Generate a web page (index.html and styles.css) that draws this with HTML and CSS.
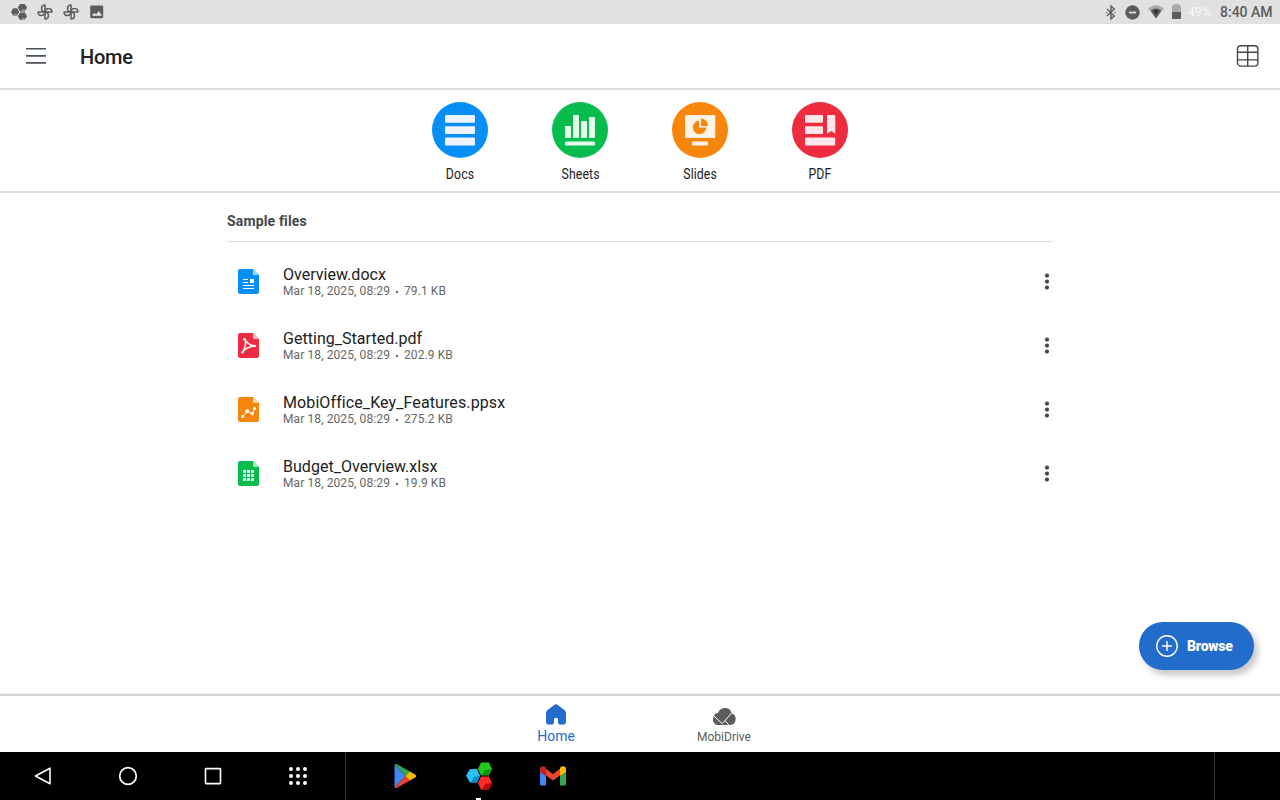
FILE: index.html
```html
<!DOCTYPE html>
<html lang="en">
<head>
<meta charset="utf-8">
<title>Home</title>
<link rel="stylesheet" href="styles.css">
</head>
<body>
<svg class="defs" width="0" height="0">
  <defs>
    <symbol id="pinwheel" viewBox="0 0 16 16">
      <g fill="none" stroke="#5c5c5c" stroke-width="1.5" stroke-linejoin="round">
        <path id="vane" d="M8 8V1.1H6.8A3.2 3.2 0 0 0 4.6 4.3C4.6 6.4 6 8 8 8Z"/>
        <use href="#vane" transform="rotate(90 8 8)"/>
        <use href="#vane" transform="rotate(180 8 8)"/>
        <use href="#vane" transform="rotate(270 8 8)"/>
      </g>
    </symbol>
    <symbol id="more" viewBox="0 0 6 18">
      <g fill="#40474e"><circle cx="3" cy="2.6" r="2.1"/><circle cx="3" cy="8.6" r="2.1"/><circle cx="3" cy="14.6" r="2.1"/></g>
    </symbol>
  </defs>
</svg>

<div class="status">
  <div class="status-left">
    <svg width="16" height="16" viewBox="0 0 16 16">
      <g fill="#5c5c5c"><path d="M2.2 4.2H6.2L8.2 8 6.2 11.8H2.2L0 8Z"/><path d="M9 0H13.8L16 3.6 13.8 7.4H9L6.8 3.6Z"/><path d="M9 8.6H13.8L16 12.2 13.8 16H9L6.8 12.2Z"/></g>
      <g fill="#999"><path d="M7.2 10 6.2 11.8H2.2L3.4 9.8Z"/><path d="M15 5.4 13.8 7.4H9.6L11.5 5.4Z"/><path d="M15 14 13.8 16H9.6L11.5 14Z"/></g>
    </svg>
    <svg width="16" height="16"><use href="#pinwheel"/></svg>
    <svg width="16" height="16"><use href="#pinwheel"/></svg>
    <svg width="16" height="16" viewBox="0 0 16 16"><rect x="1.2" y="1.6" width="13" height="12.6" rx="1.4" fill="#5c5c5c"/><path d="M3 11.8 5.3 8.7 7 10.5 9.8 7 13 11.8Z" fill="#e8e8e8"/></svg>
  </div>
  <div class="status-right">
    <svg class="bt" width="10" height="15" viewBox="0 0 10 15"><path d="M1 4 8.3 10.9 5 14V1L8.3 4.1 1 11" fill="none" stroke="#5c5c5c" stroke-width="1.4"/><path d="M0 7.5H1.4M8.3 7.5H9.7" stroke="#5c5c5c" stroke-width="1.2"/></svg>
    <svg class="dnd" width="15" height="15" viewBox="0 0 15 15"><circle cx="7.5" cy="7.5" r="7.2" fill="#5c5c5c"/><path d="M4 7.5H11" stroke="#e2e2e2" stroke-width="1.8"/></svg>
    <svg class="wifi" width="16" height="14" viewBox="0 0 16 14"><path d="M0 3.4Q8-2.8 16 3.4L8 13.6Z" fill="#a9a9a9"/><path d="M2.7 5.8Q8 1.4 13.3 5.8L8 13.6Z" fill="#5c5c5c"/><path d="M5.7 5.6Q8 3.5 10.3 5.6L8 10Z" fill="#2e2e2e"/></svg>
    <svg class="battery" width="9" height="15" viewBox="0 0 9 15"><path d="M2.2 0H6.8V1.2H8Q9 1.2 9 2.2V8H0V2.2Q0 1.2 1 1.2H2.2Z" fill="#a9a9a9"/><path d="M0 8H9V14Q9 15 8 15H1Q0 15 0 14Z" fill="#5c5c5c"/></svg>
    <span class="percent">49%</span>
    <span class="clock">8:40 AM</span>
  </div>
</div>

<header class="appbar">
  <svg width="20" height="18" viewBox="0 0 20 18"><path d="M0 1.7H20M0 8.9H20M0 15.9H20" stroke="#4a525a" stroke-width="1.6"/></svg>
  <h1 class="title">Home</h1>
  <svg class="grid-icon" width="22" height="22" viewBox="0 0 22 22"><g fill="none" stroke="#40474e" stroke-width="1.4"><rect x=".5" y=".7" width="20.4" height="20.4" rx="3.4"/><path d="M10.7 .7V21.1M.5 7.3H20.9M.5 14.9H20.9"/></g></svg>
</header>

<nav class="shortcuts">
  <div class="shortcut">
    <svg width="56" height="56" viewBox="0 0 56 56"><circle cx="28" cy="28" r="28" fill="#058ef5"/><g fill="#eff3ff"><rect x="13" y="13" width="30" height="7.8" rx="1"/><rect x="13" y="24.2" width="30" height="7.8" rx="1"/><rect x="13" y="35.6" width="30" height="7.8" rx="1"/></g></svg>
    <span class="shortcut-label">Docs</span>
  </div>
  <div class="shortcut">
    <svg width="56" height="56" viewBox="0 0 56 56"><circle cx="28" cy="28" r="28" fill="#06bc4d"/><g fill="#e5fdec"><rect x="13" y="24" width="6" height="12" rx="1"/><rect x="21" y="13" width="6" height="23" rx="1"/><rect x="29" y="19" width="6" height="17" rx="1"/><rect x="37" y="15" width="6" height="21" rx="1"/><rect x="13" y="39.4" width="30" height="4" rx=".8"/></g></svg>
    <span class="shortcut-label">Sheets</span>
  </div>
  <div class="shortcut">
    <svg width="56" height="56" viewBox="0 0 56 56"><circle cx="28" cy="28" r="28" fill="#f7860b"/><g fill="#fff3e8"><rect x="13" y="13" width="30.3" height="23" rx="1"/><rect x="20" y="39.4" width="16" height="4" rx=".8"/></g><g fill="#f7860b"><path d="M27.3 18.7V25.6H34.2A6.7 6.7 0 1 1 27.3 18.7Z"/><path d="M29 16.6A7 7 0 0 1 36 23.9H29Z"/></g></svg>
    <span class="shortcut-label">Slides</span>
  </div>
  <div class="shortcut">
    <svg width="56" height="56" viewBox="0 0 56 56"><circle cx="28" cy="28" r="28" fill="#ef2b40"/><g fill="#ffe6ea"><rect x="13" y="13" width="18" height="7.8" rx="1"/><rect x="13" y="24.2" width="18" height="7.8" rx="1"/><rect x="13" y="35.6" width="30.2" height="7.8" rx="1"/><path d="M36 13H42.3Q43.3 13 43.3 14V31.8L39.2 29 35 31.8V14Q35 13 36 13Z"/></g></svg>
    <span class="shortcut-label">PDF</span>
  </div>
</nav>

<main class="content">
  <section class="files">
    <h2 class="section-title">Sample files</h2>
    <div class="file">
      <svg class="file-icon" width="21" height="25" viewBox="0 0 21 25"><path d="M2 0H15L21 6V23Q21 25 19 25H2Q0 25 0 23V2Q0 0 2 0Z" fill="#058ef5"/><path d="M15 0 21 6H16Q15 6 15 5Z" fill="#a5d5ff"/><path d="M5 10.5H10M5 13.5H10M5 16.5H16M5 19.5H16" stroke="#fff" stroke-width="1.1"/><rect x="12" y="10" width="4" height="4" fill="#fff"/></svg>
      <div class="file-text"><div class="file-name">Overview.docx</div><div class="file-meta">Mar 18, 2025, 08:29<i class="dot"></i>79.1 KB</div></div>
      <svg width="6" height="18"><use href="#more"/></svg>
    </div>
    <div class="file">
      <svg class="file-icon" width="21" height="25" viewBox="0 0 21 25"><path d="M2 0H15L21 6V23Q21 25 19 25H2Q0 25 0 23V2Q0 0 2 0Z" fill="#ef2b40"/><path d="M15 0 21 6H16Q15 6 15 5Z" fill="#ffb9c1"/><path d="M6.8 6C8.4 8.6 9.8 12.2 16.6 12.8C11.8 13.6 7.6 14.8 4.6 19.3C7.2 15 8.6 10.6 6.8 6Z" fill="none" stroke="#fff" stroke-width="1.4" stroke-linejoin="round"/><g fill="#fff"><circle cx="6.4" cy="6.2" r="1.3"/><circle cx="16.6" cy="13" r="1.3"/><circle cx="4.5" cy="19.2" r="1.3"/></g></svg>
      <div class="file-text"><div class="file-name">Getting_Started.pdf</div><div class="file-meta">Mar 18, 2025, 08:29<i class="dot"></i>202.9 KB</div></div>
      <svg width="6" height="18"><use href="#more"/></svg>
    </div>
    <div class="file">
      <svg class="file-icon" width="21" height="25" viewBox="0 0 21 25"><path d="M2 0H15L21 6V23Q21 25 19 25H2Q0 25 0 23V2Q0 0 2 0Z" fill="#f7860b"/><path d="M15 0 21 6H16Q15 6 15 5Z" fill="#ffdcaf"/><path d="M4.6 19.4 9.2 14.4 14.4 16.5 16.6 11.6" fill="none" stroke="#fff" stroke-width=".9"/><g fill="#fff"><circle cx="4.6" cy="19.4" r="1.5"/><circle cx="9.2" cy="14.3" r="2"/><circle cx="14.4" cy="16.5" r="1.7"/><circle cx="16.6" cy="11.6" r="1.6"/></g></svg>
      <div class="file-text"><div class="file-name file-name-wide">MobiOffice_Key_Features.ppsx</div><div class="file-meta">Mar 18, 2025, 08:29<i class="dot"></i>275.2 KB</div></div>
      <svg width="6" height="18"><use href="#more"/></svg>
    </div>
    <div class="file">
      <svg class="file-icon" width="21" height="25" viewBox="0 0 21 25"><path d="M2 0H15L21 6V23Q21 25 19 25H2Q0 25 0 23V2Q0 0 2 0Z" fill="#06bc4d"/><path d="M15 0 21 6H16Q15 6 15 5Z" fill="#a7efc1"/><path d="M5 10.5H16M5 14.5H16M5 18.5H16" stroke="#e5fdec" stroke-width="3" stroke-dasharray="3 1"/></svg>
      <div class="file-text"><div class="file-name">Budget_Overview.xlsx</div><div class="file-meta">Mar 18, 2025, 08:29<i class="dot"></i>19.9 KB</div></div>
      <svg width="6" height="18"><use href="#more"/></svg>
    </div>
  </section>
  <button class="browse">
    <svg width="22" height="22" viewBox="0 0 22 22"><g fill="none" stroke="#fff" stroke-width="1.4"><circle cx="11" cy="11" r="10.2"/><path d="M11 6V16M6 11H16"/></g></svg>
    <span>Browse</span>
  </button>
</main>

<nav class="tabs">
  <div class="tab tab-active">
    <svg width="20" height="21" viewBox="0 0 20 21"><path d="M8.2 .9Q10-.5 11.8 .9L18.7 6.3Q20 7.4 20 9V17.8Q20 20.6 17.2 20.6H14.6Q12 20.6 12 18V15.2Q12 13.7 10 13.7T8 15.2V18Q8 20.6 5.4 20.6H2.8Q0 20.6 0 17.8V9Q0 7.4 1.3 6.3Z" fill="#226dcc"/></svg>
    <span>Home</span>
  </div>
  <div class="tab">
    <svg width="23" height="17" viewBox="0 0 23 17"><path d="M5.5 17A5.4 5.4 0 0 1 .3 9.5Q1.3 5.1 5 4.9C6 1.6 9 0 12 0C16 0 18.1 2.2 18.5 5.3C21.2 5.9 22.7 8 22.7 10.8Q22.5 17 17 17Z" fill="#5c5c5c"/><path d="M1 8.2 9.3 15.7 18.8 4.8M12.1 12.6 15.8 17" fill="none" stroke="#fff" stroke-width="1"/></svg>
    <span>MobiDrive</span>
  </div>
</nav>

<footer class="system">
  <div class="system-keys">
    <svg width="24" height="24" viewBox="0 0 24 24"><path d="M19 4.2V19.8L4.5 12Z" fill="none" stroke="#fff" stroke-width="1.6" stroke-linejoin="round"/></svg>
    <svg width="24" height="24" viewBox="0 0 24 24"><circle cx="12" cy="12" r="8.3" fill="none" stroke="#fff" stroke-width="1.7"/></svg>
    <svg width="24" height="24" viewBox="0 0 24 24"><rect x="4.5" y="4.6" width="15" height="15" rx=".5" fill="none" stroke="#fff" stroke-width="1.6"/></svg>
    <svg width="24" height="24" viewBox="0 0 24 24"><path d="M5 5H19.1M5 12H19.1M5 19H19.1" stroke="#fff" stroke-width="4" stroke-linecap="round" stroke-dasharray="0 7"/></svg>
  </div>
  <div class="dock">
    <svg width="24" height="26" viewBox="0 0 24 26"><path d="M1.5 1.3V24.7L12.4 13Z" fill="#4285f4"/><path d="M1.5 1.3Q2.2 .5 4 1.3L17 8.6 12.4 13Z" fill="#34a853"/><path d="M1.5 24.7Q2.2 25.5 4 24.7L17 17.4 12.4 13Z" fill="#ea4335"/><path d="M17 8.6 22 11.4Q24.2 13 22 14.6L17 17.4 12.4 13Z" fill="#fbbc04"/></svg>
    <div class="dock-active">
      <svg width="26" height="28" viewBox="0 0 26 28"><path d="M4 7H11L14 13.7 11 20.5H4L0 13.7Z" fill="#29c0fa"/><path d="M14 13.7 11 20.5H5L8 14.8Z" fill="#078bd1"/><path d="M15 .5H23L26 7 23 13.3H15L12 7Z" fill="#22c719"/><path d="M26 7 23 13.3H16L19 8.2Z" fill="#0d970b"/><path d="M15 14.6H23L26 20.8 23 27.5H15L12 20.8Z" fill="#fa2e26"/><path d="M26 20.8 23 27.5H16L19 22Z" fill="#c00605"/></svg>
      <i class="running"></i>
    </div>
    <svg width="26" height="20" viewBox="0 0 26 20"><path d="M0 5.5 6 10V19.5H1.5Q0 19.5 0 18Z" fill="#4285f4"/><path d="M26 5.5 20 10V19.5H24.5Q26 19.5 26 18Z" fill="#34a853"/><path d="M6 2.8 13 8 20 2.8V9.5L13 14.5 6 9.5Z" fill="#ea4335"/><path d="M0 6V3C0 .2 2.8-.6 5 1L6 1.8V10Z" fill="#c5221f"/><path d="M26 6V3C26 .2 23.2-.6 21 1L20 1.8V10Z" fill="#fbbc04"/></svg>
  </div>
  <div class="system-end"></div>
</footer>
</body>
</html>
```
FILE: styles.css
```css
* { box-sizing: border-box; }
body { margin: 0; width: 1280px; height: 800px; overflow: hidden; display: flex; flex-direction: column; background: #fff; font-family: Roboto, sans-serif; color: #212121; }
svg { display: block; flex: none; overflow: visible; }
.defs { display: none; }

.status { flex: none; height: 24px; background: #e1e1e1; display: flex; justify-content: space-between; align-items: center; padding: 0 8px 0 11px; }
.status-left { display: flex; gap: 10px; }
.status-right { display: flex; align-items: center; color: #5c5c5c; white-space: nowrap; }
.bt { margin-right: 9px; }
.dnd { margin-right: 8px; }
.wifi { margin-right: 8px; }
.battery { margin: -2px 7px 0 0; }
.percent { width: 32px; color: #f7f7f7; font-size: 12px; letter-spacing: .2px; }
.clock { width: 52px; font-size: 14px; font-weight: 500; }

.appbar { flex: none; height: 66px; display: flex; align-items: center; padding: 0 21px 0 26px; border-bottom: 2px solid #dcdcdc; }
.title { margin: 2px 0 0 34px; font-size: 20px; line-height: 24px; font-weight: 500; letter-spacing: -.25px; }
.grid-icon { margin-left: auto; }

.shortcuts { flex: none; height: 103px; padding-top: 12px; display: flex; justify-content: center; gap: 64px; border-bottom: 2px solid #dcdcdc; }
.shortcut { width: 56px; display: flex; flex-direction: column; align-items: center; gap: 8px; }
.shortcut-label { padding-left: 1px; font-size: 14px; line-height: 16px; letter-spacing: .1px; transform: scaleX(.88); }

.content { flex: 1; position: relative; }
.files { width: 826px; margin: 0 auto; }
.section-title { margin: 0 0 8px; height: 49px; padding-top: 18px; border-bottom: 1px solid #dcdcdc; font-size: 14px; line-height: 20px; font-weight: 700; letter-spacing: .15px; color: #40474e; font-variant-ligatures: common-ligatures; }
.file { height: 64px; display: flex; align-items: center; padding: 0 3px 0 11px; }
.file-icon { margin-bottom: 2px; }
.file-text { flex: 1; margin-left: 24px; }
.file-name { font-size: 16px; line-height: 18px; letter-spacing: .03px; }
.file-name-wide { letter-spacing: .1px; }
.file-meta { display: flex; align-items: center; font-size: 12px; line-height: 14px; letter-spacing: .1px; color: #666; }
.dot { width: 2px; height: 2px; margin: 1px 6px 0; background: #666; }

.browse { position: absolute; right: 26px; bottom: 24px; width: 115px; height: 48px; padding: 0 0 0 17px; display: flex; align-items: center; gap: 9px; border: 0; border-radius: 24px; background: #226dcc; color: #fff; font: 900 14px/20px Roboto, sans-serif; letter-spacing: -.2px; box-shadow: 4px 5px 6px rgba(0, 0, 0, .22); }

.tabs { flex: none; height: 58px; border-top: 2px solid #d2d2d2; display: flex; justify-content: center; box-shadow: 0 -1px 2px rgba(0, 0, 0, .08); }
.tab { width: 168px; padding-bottom: 8px; display: flex; flex-direction: column; align-items: center; justify-content: flex-end; gap: 5px; font-size: 12px; line-height: 14px; color: #5c5c5c; }
.tab-active { padding-bottom: 7px; gap: 3px; font-size: 14px; line-height: 17px; color: #226dcc; }

.system { flex: none; height: 48px; background: #000; display: flex; }
.system-keys { width: 346px; padding-left: 31px; display: flex; align-items: center; gap: 61px; border-right: 1px solid #333; }
.dock { flex: 1; display: flex; align-items: center; padding-left: 47px; gap: 49px; }
.dock-active { position: relative; }
.dock-active + svg { margin-left: -1px; }
.running { position: absolute; left: 10px; bottom: -10px; width: 5px; height: 2px; background: #fff; }
.system-end { width: 66px; border-left: 1px solid #333; }
```
